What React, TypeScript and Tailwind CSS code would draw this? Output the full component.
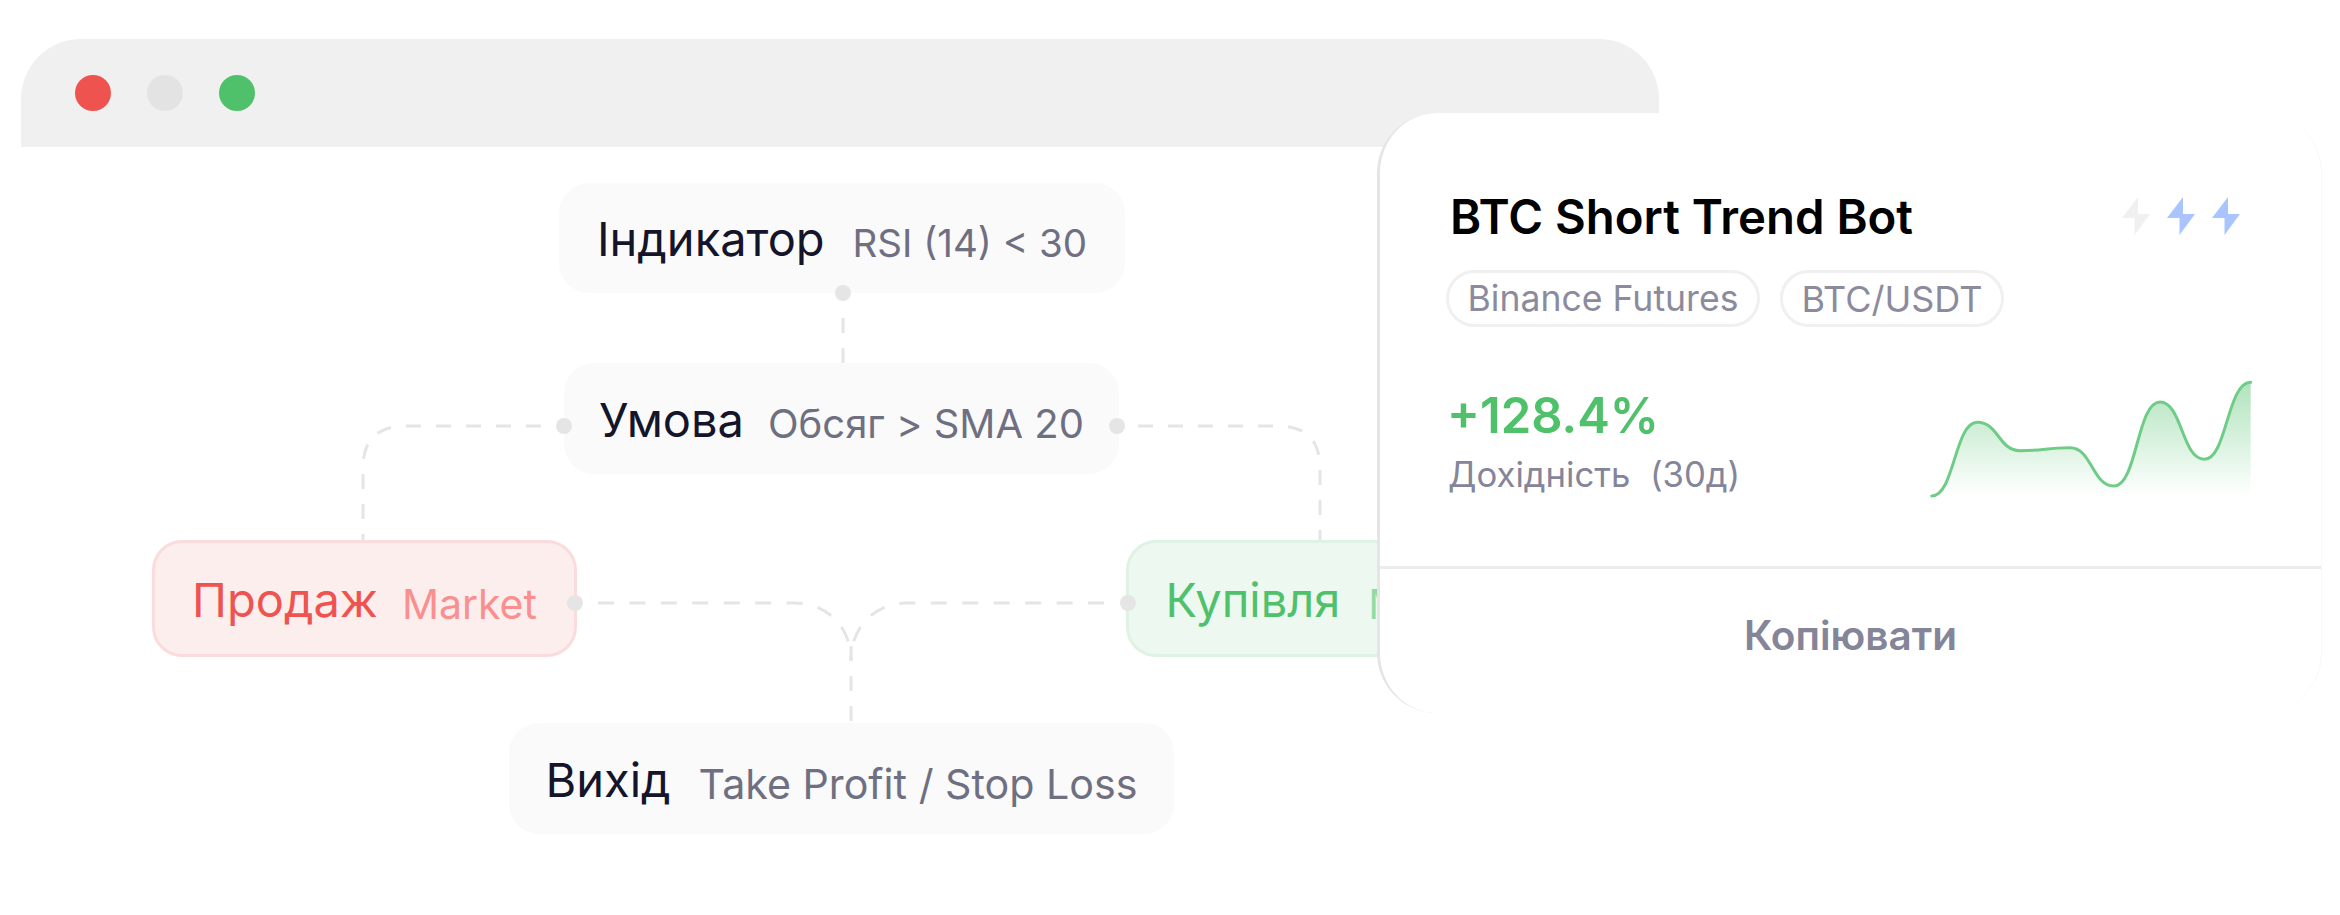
const mainCls = "text-[47px] leading-[56px] text-[#14142b] translate-y-[1px]";
const subCls = "text-[40px] leading-[48px] text-[#6f6f82] translate-y-[5px]";

function Dot({ className }: { className: string }) {
  return <span className={"absolute h-4 w-4 rounded-full bg-[#e5e5e5] " + className} />;
}

function Bolt({ className }: { className: string }) {
  return (
    <svg viewBox="0 0 28 38" className={"h-[38px] w-[28px] " + className}>
      <path d="M16 0 0 21h12.5v17L28 17H16z" fill="currentColor" />
    </svg>
  );
}

function Connectors() {
  return (
    <svg className="absolute left-0 top-0 h-[915px] w-[2340px]" viewBox="0 0 2340 915" fill="none">
      <g stroke="#e5e5e5" strokeWidth="3" strokeDasharray="15 15">
        <path d="M843 363V303" />
        <path d="M541 426H405Q363 426 363 468V540" />
        <path d="M1138 426H1278Q1320 426 1320 468V540" />
        <path d="M851 721V640" />
      </g>
      <g stroke="#e5e5e5" strokeWidth="3" strokeDasharray="16 15.43">
        <path d="M598 603H795C825 603 851 625 851 660" />
        <path d="M1104 603H907C877 603 851 625 851 660" />
      </g>
    </svg>
  );
}

function Sparkline() {
  const line =
    "M31.7 136C54.5 136 54.5 62.3 77.3 62.3C98.6 62.3 98.6 90.7 120 90.7C145 90.7 145 87.7 170 87.7C192 87.7 192 126 214 126C237 126 237 42 260 42C282 42 282 99.3 304.3 99.3C327 99.3 327 22.3 350.7 22.3";
  return (
    <svg className="h-[160px] w-[380px]" viewBox="0 0 380 160" fill="none">
      <defs>
        <linearGradient id="spark" x1="0" y1="22" x2="0" y2="136" gradientUnits="userSpaceOnUse">
          <stop offset="0" stopColor="#4fc16b" stopOpacity="0.45" />
          <stop offset="1" stopColor="#4fc16b" stopOpacity="0" />
        </linearGradient>
      </defs>
      <path d={line + "V136H31.7Z"} fill="url(#spark)" />
      <path d={line} stroke="#6fcc87" strokeWidth="3" strokeLinecap="round" />
    </svg>
  );
}

function Card() {
  return (
    <div className="absolute left-[1377px] top-[113px] flex h-[600px] w-[945px] flex-col rounded-[60px] border-l-[3px] border-r border-l-[#e5e5e5] border-r-[#f8f8f8] bg-white">
      <div className="relative h-[453px] shrink-0 pl-[70px]">
        <div className="flex h-[132px] items-end text-[47.3px] font-semibold leading-[56px] text-black">
          BTC Short Trend Bot
        </div>
        <div className="absolute left-[66px] top-[157px] flex gap-5">
          <span className="flex h-[57px] w-[314px] items-center justify-center rounded-full border-[3px] border-[#f0f0f0] text-[35.6px] text-[#8b8b9d]">
            Binance Futures
          </span>
          <span className="flex h-[57px] w-[224px] items-center justify-center rounded-full border-[3px] border-[#f0f0f0] text-[36px] text-[#8b8b9d]">
            BTC/USDT
          </span>
        </div>
        <div className="absolute left-[742px] top-[84px] flex gap-[17px]">
          <Bolt className="text-[#f0f0f0]" />
          <Bolt className="text-[#aac4ff]" />
          <Bolt className="text-[#aac4ff]" />
        </div>
        <div className="absolute left-[67px] top-[273px] text-[49px] font-semibold leading-[60px] text-[#4fc16b]">
          +128.4%
        </div>
        <div className="absolute left-[68px] top-[340px] whitespace-pre text-[34.7px] leading-[42px] text-[#85859a]">
          Дохідність  (30д)
        </div>
        <div className="absolute left-[520px] top-[247px]">
          <Sparkline />
        </div>
      </div>
      <div className="flex flex-1 items-center justify-center border-t-[3px] border-[#ececec] pb-[10px] text-[40.5px] font-semibold text-[#85859a]">
        Копіювати
      </div>
    </div>
  );
}

export default function App() {
  return (
    <div className="relative h-[915px] w-[2340px] overflow-hidden bg-white pt-[39px] font-['Inter',sans-serif]">
      <div className="ml-[21px] flex h-[108px] w-[1638px] items-center gap-9 rounded-t-[60px] bg-[#f0f0f0] pl-[54px]">
        <span className="h-9 w-9 rounded-full bg-[#ef5350]" />
        <span className="h-9 w-9 rounded-full bg-[#e3e3e3]" />
        <span className="h-9 w-9 rounded-full bg-[#4fc16b]" />
      </div>

      <Connectors />

      <div className="absolute left-[559px] top-[183px] flex h-[110px] w-[566px] items-center justify-center gap-7 rounded-[30px] bg-[#fafafa]">
        <span className={mainCls}>Індикатор</span>
        <span className="translate-y-[5px] text-[38.5px] leading-[48px] text-[#6f6f82]">RSI (14) &lt; 30</span>
      </div>
      <Dot className="left-[835px] top-[285px]" />

      <div className="absolute left-[564px] top-[363px] flex h-[111px] w-[555px] items-center justify-center gap-6 rounded-[30px] bg-[#fafafa]">
        <span className={mainCls}>Умова</span>
        <span className={subCls}>Обсяг &gt; SMA 20</span>
      </div>
      <Dot className="left-[556px] top-[418px]" />
      <Dot className="left-[1109px] top-[418px]" />

      <div className="absolute left-[152px] top-[540px] flex h-[117px] w-[425px] items-center justify-center gap-6 rounded-[30px] border-[3px] border-[#fadcdc] bg-[#fdeeee]">
        <span className="translate-y-[1px] text-[47px] leading-[56px] text-[#ef5350]">Продаж</span>
        <span className="translate-y-[5px] text-[41px] leading-[48px] text-[#f98f8f]">Market</span>
      </div>
      <Dot className="left-[567px] top-[595px]" />

      <div className="absolute left-[1126px] top-[540px] flex h-[117px] w-[417px] items-center justify-center gap-7 rounded-[30px] border-[3px] border-[#dff3e4] bg-[#edf8f0]">
        <span className="translate-y-[1px] text-[47px] leading-[56px] text-[#4fc16b]">Купівля</span>
        <span className="translate-y-[5px] text-[41px] leading-[48px] text-[#8fdca3]">Market</span>
      </div>
      <Dot className="left-[1120px] top-[595px]" />

      <div className="absolute left-[509px] top-[723px] flex h-[111px] w-[665px] items-center justify-center gap-7 rounded-[30px] bg-[#fafafa]">
        <span className={mainCls}>Вихід</span>
        <span className="translate-y-[5px] text-[41.2px] leading-[48px] text-[#6f6f82]">Take Profit / Stop Loss</span>
      </div>

      <Card />
    </div>
  );
}
